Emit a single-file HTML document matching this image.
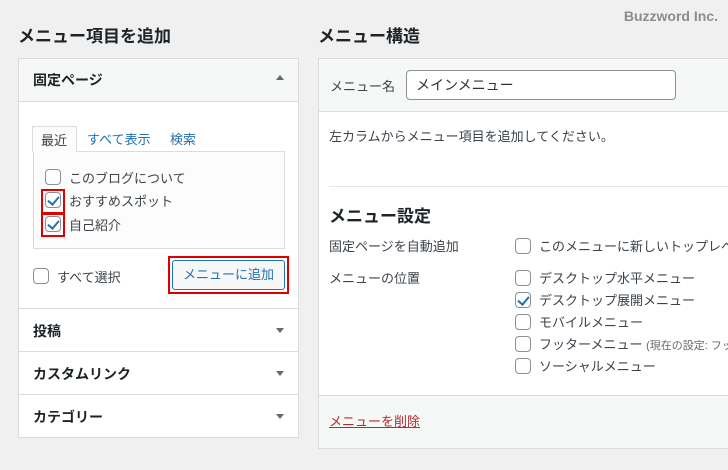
<!DOCTYPE html>
<html><head><meta charset="utf-8"><style>
*{margin:0;padding:0;box-sizing:border-box}
html,body{width:728px;height:470px;overflow:hidden}
body{background:#f0f0f1;font-family:"Liberation Sans","Noto Sans CJK JP",sans-serif;color:#3c434a;font-size:13px;position:relative}
#w{position:absolute;left:0;top:0;width:728px;height:470px;overflow:hidden}
.a{position:absolute;white-space:nowrap}
h2{position:absolute;font-size:17px;font-weight:bold;color:#1d2327}
.cb{position:absolute;width:16px;height:16px;border:1px solid #8c8f94;border-radius:4px;background:#fff}
.cb.on::after{content:"";position:absolute;left:4px;top:1px;width:5px;height:9px;border:solid #2271b1;border-width:0 2.5px 2.5px 0;transform:rotate(40deg)}
.red{position:absolute;border:2px solid #e00000}
.row{position:absolute;left:18px;width:281px;height:44px;border:1px solid #dcdcde;background:#fff;font-weight:bold;font-size:14px;color:#1d2327;padding:12px 0 0 14px}
.tri{position:absolute;right:14px;top:19px;width:0;height:0;border-left:4px solid transparent;border-right:4px solid transparent;border-top:5px solid #646970}
</style></head><body><div id="w">
<div class="a" style="right:10px;top:8px;color:#8c8c8c;font-size:14px;font-weight:bold">Buzzword Inc.</div>
<h2 style="left:18px;top:22px">メニュー項目を追加</h2>
<h2 style="left:318px;top:22px">メニュー構造</h2>

<div class="a" style="left:18px;top:58px;width:281px;height:251px;border:1px solid #dcdcde;background:#fff"></div>
<div class="a" style="left:19px;top:59px;width:279px;height:43px;background:#f6f7f7;border-bottom:1px solid #dcdcde;font-weight:bold;font-size:14px;color:#1d2327;padding:11px 0 0 14px">固定ページ</div>
<div class="a" style="left:276px;top:75px;width:0;height:0;border-left:4px solid transparent;border-right:4px solid transparent;border-bottom:5px solid #646970"></div>
<div class="a" style="left:33px;top:151px;width:252px;height:98px;border:1px solid #dcdcde;background:#fcfcfc"></div>
<div class="a" style="left:32px;top:126px;width:45px;height:26px;border:1px solid #dcdcde;border-bottom:none;background:#fcfcfc;padding:3px 0 0 8px">最近</div>
<div class="a" style="left:87px;top:129px;color:#2271b1">すべて表示</div>
<div class="a" style="left:170px;top:129px;color:#2271b1">検索</div>
<div class="cb" style="left:45px;top:169px"></div><div class="a" style="left:69px;top:168px">このブログについて</div>
<div class="cb on" style="left:45px;top:192px"></div><div class="a" style="left:69px;top:191px">おすすめスポット</div>
<div class="cb on" style="left:45px;top:216px"></div><div class="a" style="left:69px;top:215px">自己紹介</div>
<div class="red" style="left:41px;top:189px;width:24px;height:25px"></div>
<div class="red" style="left:41px;top:213px;width:24px;height:24px"></div>
<div class="cb" style="left:33px;top:268px"></div><div class="a" style="left:57px;top:267px">すべて選択</div>
<div class="a" style="left:172px;top:260px;width:113px;height:30px;border:1px solid #2271b1;border-radius:3px;background:#f6f7f7;color:#2271b1;text-align:center;line-height:27px">メニューに追加</div>
<div class="red" style="left:168px;top:256px;width:121px;height:38px"></div>
<div class="row" style="top:308px">投稿<span class="tri"></span></div>
<div class="row" style="top:351px">カスタムリンク<span class="tri"></span></div>
<div class="row" style="top:394px">カテゴリー<span class="tri"></span></div>

<div class="a" style="left:318px;top:58px;width:420px;height:391px;border:1px solid #dcdcde;background:#fff"></div>
<div class="a" style="left:319px;top:59px;width:420px;height:53px;background:#f6f7f7;border-bottom:1px solid #dcdcde"></div>
<div class="a" style="left:330px;top:76px">メニュー名</div>
<div class="a" style="left:406px;top:70px;width:270px;height:30px;border:1px solid #8c8f94;border-radius:4px;background:#fff;padding:4px 0 0 9px;color:#2c3338;font-size:14px">メインメニュー</div>
<div class="a" style="left:329px;top:126px">左カラムからメニュー項目を追加してください。</div>
<div class="a" style="left:329px;top:186px;width:400px;height:1px;background:#e5e5e5"></div>
<div class="a" style="left:329px;top:202px;font-size:17px;font-weight:bold;color:#1d2327">メニュー設定</div>
<div class="a" style="left:329px;top:236px">固定ページを自動追加</div>
<div class="a" style="left:329px;top:268px">メニューの位置</div>
<div class="cb" style="left:515px;top:238px"></div><div class="a" style="left:539px;top:236px">このメニューに新しいトップレベルページを自動追加</div>
<div class="cb" style="left:515px;top:270px"></div><div class="a" style="left:539px;top:268px">デスクトップ水平メニュー</div>
<div class="cb on" style="left:515px;top:292px"></div><div class="a" style="left:539px;top:290px">デスクトップ展開メニュー</div>
<div class="cb" style="left:515px;top:314px"></div><div class="a" style="left:539px;top:312px">モバイルメニュー</div>
<div class="cb" style="left:515px;top:336px"></div><div class="a" style="left:539px;top:334px">フッターメニュー <span style="font-size:11px;color:#646970">(現在の設定: フッターメニュー)</span></div>
<div class="cb" style="left:515px;top:358px"></div><div class="a" style="left:539px;top:356px">ソーシャルメニュー</div>
<div class="a" style="left:319px;top:395px;width:420px;height:53px;background:#f6f7f7;border-top:1px solid #dcdcde"></div>
<div class="a" style="left:329px;top:411px;color:#b32d2e;text-decoration:underline">メニューを削除</div>
</div></body></html>
